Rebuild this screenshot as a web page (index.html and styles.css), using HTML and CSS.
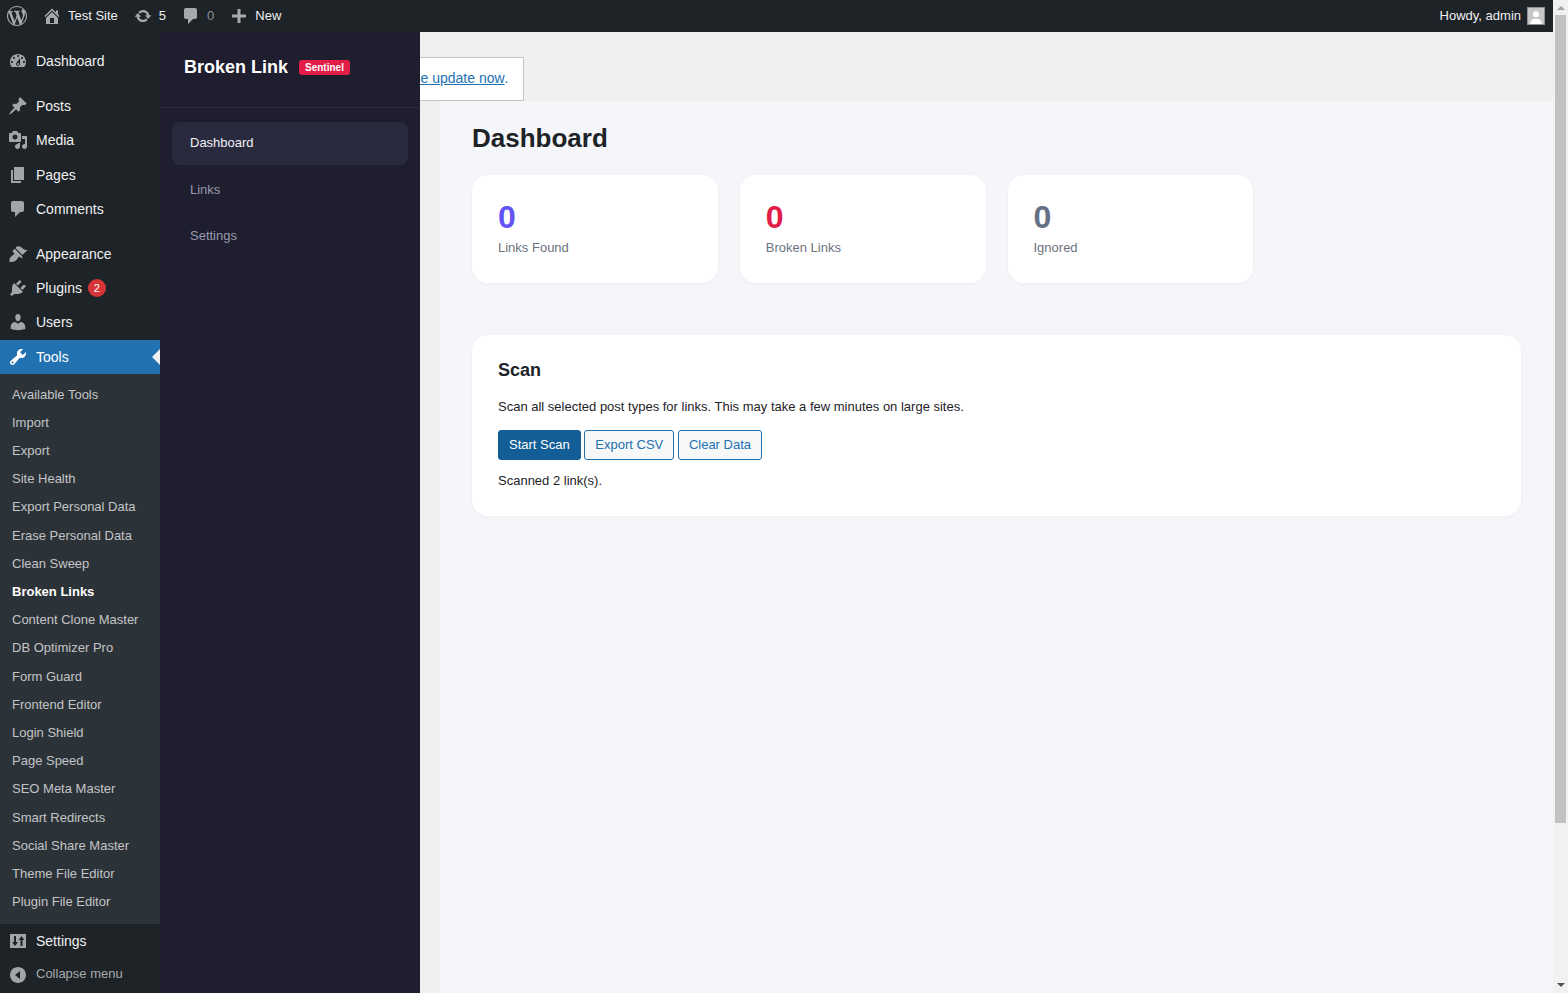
FILE: index.html
```html
<!DOCTYPE html>
<html lang="en">

<head>
  <meta charset="UTF-8">
  <meta name="viewport" content="width=device-width, initial-scale=1.0">
  <title>Broken Link Sentinel</title>
  <link rel="stylesheet" href="styles.css">
</head>

<body>
  <div class="page">
    <!-- admin bar -->
    <header class="adminBar">
      <div class="barItem logoItem">
        <svg class="barIcon" viewBox="0 0 20 20"><path d="M20 10c0-5.51-4.49-10-10-10C4.48 0 0 4.49 0 10c0 5.52 4.48 10 10 10 5.51 0 10-4.48 10-10zM7.78 15.37L4.37 6.22c.55-.02 1.17-.08 1.17-.08.5-.06.44-1.13-.06-1.11 0 0-1.45.11-2.37.11-.18 0-.37 0-.58-.01C4.12 2.69 6.87 1.11 10 1.11c2.33 0 4.45.87 6.05 2.34-.68-.11-1.65.39-1.65 1.58 0 .74.45 1.36.9 2.1.35.61.55 1.36.55 2.46 0 1.49-1.4 5-1.4 5l-3.03-8.37c.54-.02.82-.17.82-.17.5-.05.44-1.25-.06-1.22 0 0-1.44.12-2.38.12-.87 0-2.33-.12-2.33-.12-.5-.03-.56 1.2-.06 1.22l.92.08 1.26 3.41zM17.41 10c.24-.64.74-1.87.43-4.25.7 1.29 1.05 2.71 1.05 4.25 0 3.29-1.73 6.24-4.4 7.78.97-2.59 1.94-5.2 2.92-7.78zM6.1 18.09C3.12 16.65 1.11 13.53 1.11 10c0-1.3.23-2.48.72-3.59C3.25 10.3 4.67 14.2 6.1 18.09zm4.03-6.63l2.58 6.98c-.86.29-1.76.45-2.71.45-.79 0-1.57-.11-2.29-.33.81-2.38 1.62-4.74 2.42-7.1z"/></svg>
      </div>
      <div class="barItem">
        <svg class="barIcon" viewBox="0 0 20 20"><path d="M16 8.5l1.53 1.53-1.06 1.06L10 4.62l-6.47 6.47-1.06-1.06L10 2.5l4 4v-2h2v4zm-6-2.46l6 5.99V18H4v-5.97zM12 17v-5H8v5h4z"/></svg>
        <span>Test Site</span>
      </div>
      <div class="barItem updatesItem">
        <svg class="barIcon" viewBox="0 0 20 20"><path d="M10.2 3.28c3.53 0 6.43 2.61 6.92 6h2.08l-3.5 4-3.5-4h2.32c-.45-1.97-2.21-3.45-4.32-3.45-1.45 0-2.73.71-3.54 1.78L4.95 5.66C6.23 4.2 8.11 3.28 10.2 3.28zm-.4 13.44c-3.52 0-6.43-2.61-6.92-6H.8l3.5-4c1.17 1.33 2.33 2.67 3.5 4H5.48c.45 1.97 2.21 3.45 4.32 3.45 1.45 0 2.73-.71 3.54-1.78l1.71 1.95c-1.28 1.46-3.15 2.38-5.25 2.38z"/></svg>
        <span>5</span>
      </div>
      <div class="barItem commentsItem">
        <svg class="barIcon" viewBox="0 0 20 20"><path d="M5 2h9c1.1 0 2 .9 2 2v7c0 1.1-.9 2-2 2h-2l-5 5v-5H5c-1.1 0-2-.9-2-2V4c0-1.1.9-2 2-2z"/></svg>
        <span class="dimText">0</span>
      </div>
      <div class="barItem">
        <svg class="barIcon" viewBox="0 0 20 20"><path d="M17 8.5v3h-5.5V17h-3v-5.5H3v-3h5.5V3h3v5.5z"/></svg>
        <span>New</span>
      </div>
      <div class="barItem howdy">
        <span>Howdy, admin</span>
        <svg class="avatar" viewBox="0 0 18 18"><rect width="18" height="18" fill="#c6c7c9"/><circle cx="9" cy="7" r="3.4" fill="#fff"/><path d="M2.5 18c0-4.4 2.8-6 6.5-6s6.500 1.600 6.500 6z" fill="#fff"/></svg>
      </div>
    </header>

    <div class="body">
      <!-- wp menu -->
      <nav class="wpMenu">
        <ul class="menuList">
          <li class="menuItem">
            <svg class="menuIcon" viewBox="0 0 20 20"><path d="M3.76 16h12.48c1.1-1.37 1.76-3.11 1.76-5 0-4.42-3.58-8-8-8s-8 3.58-8 8c0 1.89.66 3.63 1.76 5zM10 4c.55 0 1 .45 1 1s-.45 1-1 1-1-.45-1-1 .45-1 1-1zM6 6c.55 0 1 .45 1 1s-.45 1-1 1-1-.45-1-1 .45-1 1-1zm8 0c.55 0 1 .45 1 1s-.45 1-1 1-1-.45-1-1 .45-1 1-1zm-5.37 5.55L12 7v6c0 1.1-.9 2-2 2s-2-.9-2-2c0-.57.24-1.08.63-1.45zM4 10c.55 0 1 .45 1 1s-.45 1-1 1-1-.45-1-1 .45-1 1-1zm12 0c.55 0 1 .45 1 1s-.45 1-1 1-1-.45-1-1 .45-1 1-1zm-5 3c0-.55-.45-1-1-1s-1 .45-1 1 .45 1 1 1 1-.45 1-1z" fill-rule="evenodd"/></svg>
            <span>Dashboard</span>
          </li>
          <li class="menuSep"></li>
          <li class="menuItem">
            <svg class="menuIcon" viewBox="0 0 20 20"><path d="M10.44 3.02l1.82-1.82 6.36 6.35-1.83 1.82c-1.05-.68-2.48-.57-3.41.36l-.75.75c-.92.93-1.04 2.35-.35 3.41l-1.83 1.82-2.41-2.41-2.8 2.79c-.42.42-3.38 2.71-3.8 2.29s1.86-3.39 2.28-3.81l2.79-2.79L4.1 9.36l1.83-1.82c1.05.69 2.48.57 3.4-.36l.75-.75c.93-.92 1.05-2.35.36-3.41z"/></svg>
            <span>Posts</span>
          </li>
          <li class="menuItem">
            <svg class="menuIcon" viewBox="0 0 20 20"><path d="M13 11V4c0-.55-.45-1-1-1h-1.67L9 1H5L3.67 3H2c-.55 0-1 .45-1 1v7c0 .55.45 1 1 1h10c.55 0 1-.45 1-1zM7 4.500c1.380 0 2.500 1.120 2.500 2.500S8.380 9.500 7 9.500 4.500 8.380 4.500 7 5.620 4.500 7 4.500zM14 6h5v10.500c0 1.380-1.120 2.500-2.500 2.500S14 17.880 14 16.500s1.120-2.500 2.500-2.500c.17 0 .34.02.5.05V9h-3V6zm-4 8.050V13h2v3.500c0 1.380-1.120 2.500-2.500 2.500S7 17.880 7 16.500 8.120 14 9.500 14c.17 0 .34.02.5.05z"/></svg>
            <span>Media</span>
          </li>
          <li class="menuItem">
            <svg class="menuIcon" viewBox="0 0 20 20"><path d="M6 15V2h10v13H6zm-1 1h8v2H3V5h2v11z"/></svg>
            <span>Pages</span>
          </li>
          <li class="menuItem">
            <svg class="menuIcon" viewBox="0 0 20 20"><path d="M5 2h9c1.100 0 2 .9 2 2v7c0 1.100-.9 2-2 2h-2l-5 5v-5H5c-1.100 0-2-.9-2-2V4c0-1.100.9-2 2-2z"/></svg>
            <span>Comments</span>
          </li>
          <li class="menuSep"></li>
          <li class="menuItem">
            <svg class="menuIcon" viewBox="0 0 20 20"><path d="M14.480 11.060L7.410 3.990l1.500-1.500c.5-.56 2.300-.47 3.510.32 1.210.8 1.430 1.280 2.910 2.100 1.180.64 2.450 1.260 4.450.85zm-.71.71L6.700 4.700 4.930 6.470c-.39.39-.39 1.020 0 1.410l1.060 1.060c.39.39.39 1.030 0 1.420-.6.6-1.430 1.110-2.210 1.690-.35.26-.7.53-1.010.84C1.430 13.230 1 17.990 2.010 18s4.750-.46 6.150-1.860c.3-.31.58-.66.84-1.010.58-.78 1.090-1.610 1.690-2.210.39-.39 1.030-.39 1.420 0l1.060 1.060c.39.39 1.020.39 1.410 0z"/></svg>
            <span>Appearance</span>
          </li>
          <li class="menuItem">
            <svg class="menuIcon" viewBox="0 0 20 20"><path d="M13.110 4.360L9.870 7.600 8 5.730l3.240-3.240c.35-.34 1.050-.2 1.560.32.52.51.66 1.210.31 1.550zm-8 1.770l.91-1.120 9.010 9.010-1.190.84c-.71.71-2.630 1.160-3.820 1.160H6.140L4.900 17.260c-.59.59-1.540.59-2.120 0-.59-.58-.59-1.530 0-2.120l1.240-1.240v-3.880c0-1.130.4-3.190 1.090-3.890zm7.260 3.970l3.240-3.240c.34-.35 1.040-.21 1.550.31.52.51.66 1.210.31 1.550l-3.240 3.250z"/></svg>
            <span>Plugins</span>
            <span class="countBadge">2</span>
          </li>
          <li class="menuItem">
            <svg class="menuIcon" viewBox="0 0 20 20"><path d="M10 9.250c-2.270 0-2.730-3.440-2.730-3.440C7 4.020 7.820 2 9.970 2c2.160 0 2.980 2.020 2.710 3.810 0 0-.41 3.440-2.680 3.440zm0 2.570L12.720 10c2.390 0 4.520 2.330 4.520 4.530v2.490s-3.650 1.130-7.240 1.130c-3.650 0-7.240-1.130-7.240-1.130v-2.490c0-2.250 1.940-4.480 4.470-4.480z"/></svg>
            <span>Users</span>
          </li>
          <li class="menuItem currentItem">
            <svg class="menuIcon" viewBox="0 0 20 20"><path d="M16.680 9.770c-1.340 1.340-3.300 1.670-4.950.99l-5.410 6.520c-.99.99-2.590.99-3.580 0s-.99-2.590 0-3.570l6.520-5.420c-.68-1.650-.35-3.610.99-4.950 1.280-1.280 3.120-1.620 4.720-1.060l-2.890 2.890 2.820 2.820 2.860-2.870c.53 1.580.18 3.390-1.080 4.650zM3.810 16.210c.4.39 1.040.39 1.430 0 .4-.4.4-1.040 0-1.430-.39-.4-1.030-.4-1.430 0-.39.39-.39 1.030 0 1.430z"/></svg>
            <span>Tools</span>
          </li>
          <li>
            <ul class="subMenu">
              <li>Available Tools</li>
              <li>Import</li>
              <li>Export</li>
              <li>Site Health</li>
              <li>Export Personal Data</li>
              <li>Erase Personal Data</li>
              <li>Clean Sweep</li>
              <li class="subCurrent">Broken Links</li>
              <li>Content Clone Master</li>
              <li>DB Optimizer Pro</li>
              <li>Form Guard</li>
              <li>Frontend Editor</li>
              <li>Login Shield</li>
              <li>Page Speed</li>
              <li>SEO Meta Master</li>
              <li>Smart Redirects</li>
              <li>Social Share Master</li>
              <li>Theme File Editor</li>
              <li>Plugin File Editor</li>
            </ul>
          </li>
          <li class="menuItem">
            <svg class="menuIcon" viewBox="0 0 20 20"><path fill-rule="evenodd" d="M2 3h16v14H2zM6 5v6H4l3 4 3-4H8V5zm6.500 10h2V9h1.800L13.500 5l-2.800 4h1.800z"/></svg>
            <span>Settings</span>
          </li>
          <li class="menuItem collapseItem">
            <svg class="menuIcon" viewBox="0 0 20 20"><path d="M18 10c0-4.420-3.580-8-8-8s-8 3.580-8 8 3.580 8 8 8 8-3.580 8-8zm-6-4v8l-5-4z" fill-rule="evenodd"/></svg>
            <span class="collapseText">Collapse menu</span>
          </li>
        </ul>
      </nav>

      <!-- plugin side nav -->
      <aside class="pluginNav">
        <div class="pluginHead">
          <span class="pluginName">Broken Link</span>
          <span class="pluginTag">Sentinel</span>
        </div>
        <div class="pluginLinks">
          <a class="pluginLink activeLink">Dashboard</a>
          <a class="pluginLink">Links</a>
          <a class="pluginLink">Settings</a>
        </div>
      </aside>

      <!-- main area -->
      <main class="main">
        <div class="noticeRow">
          <div class="notice"><a class="noticeLink">Please update now</a>.</div>
        </div>
        <div class="content">
          <h1 class="pageTitle">Dashboard</h1>
          <div class="stats">
            <div class="card statCard">
              <div class="statNum numFound">0</div>
              <div class="statLabel">Links Found</div>
            </div>
            <div class="card statCard">
              <div class="statNum numBroken">0</div>
              <div class="statLabel">Broken Links</div>
            </div>
            <div class="card statCard">
              <div class="statNum numIgnored">0</div>
              <div class="statLabel">Ignored</div>
            </div>
          </div>
          <section class="card scanCard">
            <h2 class="scanTitle">Scan</h2>
            <p class="scanText">Scan all selected post types for links. This may take a few minutes on large sites.</p>
            <div class="scanBtns">
              <button class="btn btnPrimary">Start Scan</button>
              <button class="btn">Export CSV</button>
              <button class="btn">Clear Data</button>
            </div>
            <p class="scanResult">Scanned 2 link(s).</p>
          </section>
        </div>
      </main>
    </div>
  </div>

  <!-- scrollbar -->
  <div class="scrollBar">
    <div class="arrowUp"></div>
    <div class="thumb"></div>
    <div class="arrowDown"></div>
  </div>
</body>

</html>
```

FILE: styles.css
```css
* {
  box-sizing: border-box;
}

html,
body {
  height: 100%;
  margin: 0;
  overflow: hidden;
}

body {
  display: flex;
  font-family: "Liberation Sans", Arial, sans-serif;
  font-size: 13px;
  color: #1d2327;
  background-color: #f0f0f1;
}

ul {
  list-style: none;
  margin: 0;
  padding: 0;
}

.page {
  flex: 1;
  min-width: 0;
  display: flex;
  flex-direction: column;
}

/* admin bar */
.adminBar {
  height: 32px;
  flex-shrink: 0;
  display: flex;
  align-items: center;
  background-color: #1d2327;
  color: #f0f0f1;
}

.barItem {
  display: flex;
  align-items: center;
  gap: 6px;
  padding: 0 8px;
  height: 100%;
}

.barItem span {
  margin-top: -2px;
}

.logoItem {
  padding: 0 7px;
}

.updatesItem {
  gap: 7px;
  padding-right: 7px;
}

.commentsItem {
  padding-right: 7px;
}

.updatesItem .barIcon {
  width: 18px;
  height: 18px;
}

.barIcon {
  width: 20px;
  height: 20px;
  fill: #a7aaad;
}

.dimText {
  color: #8c8f94;
}

.howdy {
  margin-left: auto;
  padding-right: 8px;
}

.avatar {
  width: 18px;
  height: 18px;
  border: 1px solid #8c8f94;
}

.body {
  flex: 1;
  min-height: 0;
  display: flex;
}

/* wp menu */
.wpMenu {
  width: 160px;
  flex-shrink: 0;
  padding-top: 12px;
  background-color: #1d2327;
}

.menuItem {
  position: relative;
  display: flex;
  align-items: center;
  height: 34.2px;
  padding-left: 8px;
  gap: 8px;
  font-size: 14px;
  color: #f0f0f1;
}

.menuIcon {
  width: 20px;
  height: 20px;
  flex-shrink: 0;
  fill: #a0a5aa;
}

.menuSep {
  height: 11px;
}

.currentItem {
  background-color: #2271b1;
  color: #fff;
}

.currentItem .menuIcon {
  fill: #fff;
}

.currentItem::after {
  content: "";
  position: absolute;
  right: 0;
  top: 9px;
  border: 8px solid transparent;
  border-right-color: #f0f0f1;
  border-left-width: 0;
}

.countBadge {
  width: 18px;
  height: 18px;
  margin-left: -2px;
  border-radius: 50%;
  background-color: #d63638;
  color: #fff;
  font-size: 11px;
  line-height: 18px;
  text-align: center;
}

.subMenu {
  padding: 6.9px 0 7.1px;
  background-color: #2c3338;
  color: #c3c4c7;
}

.subMenu li {
  padding: 5px 12px;
  line-height: 18.2px;
  font-size: 13px;
}

.subMenu .subCurrent {
  color: #fff;
  font-weight: 700;
}

.collapseItem {
  font-size: 13px;
  color: #a7aaad;
}

.collapseText {
  margin-top: -2px;
}

/* plugin nav */
.pluginNav {
  width: 260px;
  flex-shrink: 0;
  background-color: #1e1e2e;
}

.pluginHead {
  height: 76px;
  display: flex;
  align-items: center;
  gap: 11px;
  padding: 0 24px 4px;
  border-bottom: 1px solid #2c2c3c;
}

.pluginName {
  font-size: 18px;
  font-weight: 700;
  color: #fff;
}

.pluginTag {
  padding: 1px 6px;
  border-radius: 3px;
  background-color: #e11d48;
  color: #fff;
  font-size: 10px;
  font-weight: 700;
  line-height: 13px;
}

.pluginLinks {
  display: flex;
  flex-direction: column;
  gap: 4px;
  padding: 14px 12px;
}

.pluginLink {
  height: 42.5px;
  display: flex;
  align-items: center;
  padding: 0 18px 1px;
  border-radius: 8px;
  color: #9a9aae;
  font-size: 13px;
}

.activeLink {
  background-color: #2a2a3e;
  color: #f0f0f5;
}

/* main */
.main {
  flex: 1;
  min-width: 0;
  display: flex;
  flex-direction: column;
  overflow: hidden;
}

.noticeRow {
  height: 69px;
  flex-shrink: 0;
  padding-top: 25px;
}

.notice {
  width: fit-content;
  height: 44px;
  margin-left: -47.5px;
  padding: 0 14.5px 2px 12px;
  display: flex;
  align-items: center;
  white-space: nowrap;
  background-color: #fff;
  border: 1px solid #c3c4c7;
  font-size: 14px;
  color: #2271b1;
}

.noticeLink {
  color: #2271b1;
  text-decoration: underline;
}

.content {
  flex: 1;
  margin-left: 20px;
  padding: 21px 32px 0;
  background-color: #f5f6fa;
}

.pageTitle {
  margin: 0 0 20px;
  font-size: 26px;
  line-height: 33px;
  font-weight: 700;
  color: #1d2327;
}

.stats {
  display: grid;
  grid-template-columns: repeat(3, 245.75px);
  gap: 22px;
  margin-bottom: 52px;
}

.card {
  background-color: #fff;
  border-radius: 16px;
  box-shadow: 0 1px 4px rgba(0, 0, 0, 0.04);
}

.statCard {
  padding: 24px 26px 26px;
}

.statNum {
  font-size: 32px;
  line-height: 36px;
  font-weight: 700;
}

.numFound {
  color: #6355f5;
}

.numBroken {
  color: #e11d48;
}

.numIgnored {
  color: #667085;
}

.statLabel {
  margin-top: 4px;
  font-size: 13px;
  line-height: 18px;
  color: #6b7280;
}

.scanCard {
  padding: 26px;
}

.scanTitle {
  margin: 0 0 19px;
  font-size: 18px;
  line-height: 18px;
  font-weight: 700;
  color: #1d2327;
}

.scanText {
  margin: 0 0 14px;
  line-height: 18px;
}

.scanBtns {
  height: 30px;
}

.btn {
  height: 30px;
  padding: 0 10px 2px;
  font-family: inherit;
  font-size: 13px;
  color: #2271b1;
  background-color: #f6f7f7;
  border: 1px solid #2271b1;
  border-radius: 3px;
}

.btnPrimary {
  background-color: #135e96;
  border-color: #135e96;
  color: #fff;
}

.scanResult {
  margin: 12px 0 0;
  line-height: 18px;
}

/* scrollbar */
.scrollBar {
  width: 15px;
  flex-shrink: 0;
  display: flex;
  flex-direction: column;
  align-items: center;
  background-color: #f1f1f1;
}

.arrowUp,
.arrowDown {
  width: 0;
  height: 0;
  border-left: 4px solid transparent;
  border-right: 4px solid transparent;
}

.arrowUp {
  margin: 6px 0 5px;
  border-bottom: 4px solid #a3a3a3;
}

.thumb {
  width: 11px;
  height: 808px;
  background-color: #c1c1c1;
}

.arrowDown {
  margin-top: auto;
  margin-bottom: 6px;
  border-top: 4px solid #505050;
}
```
